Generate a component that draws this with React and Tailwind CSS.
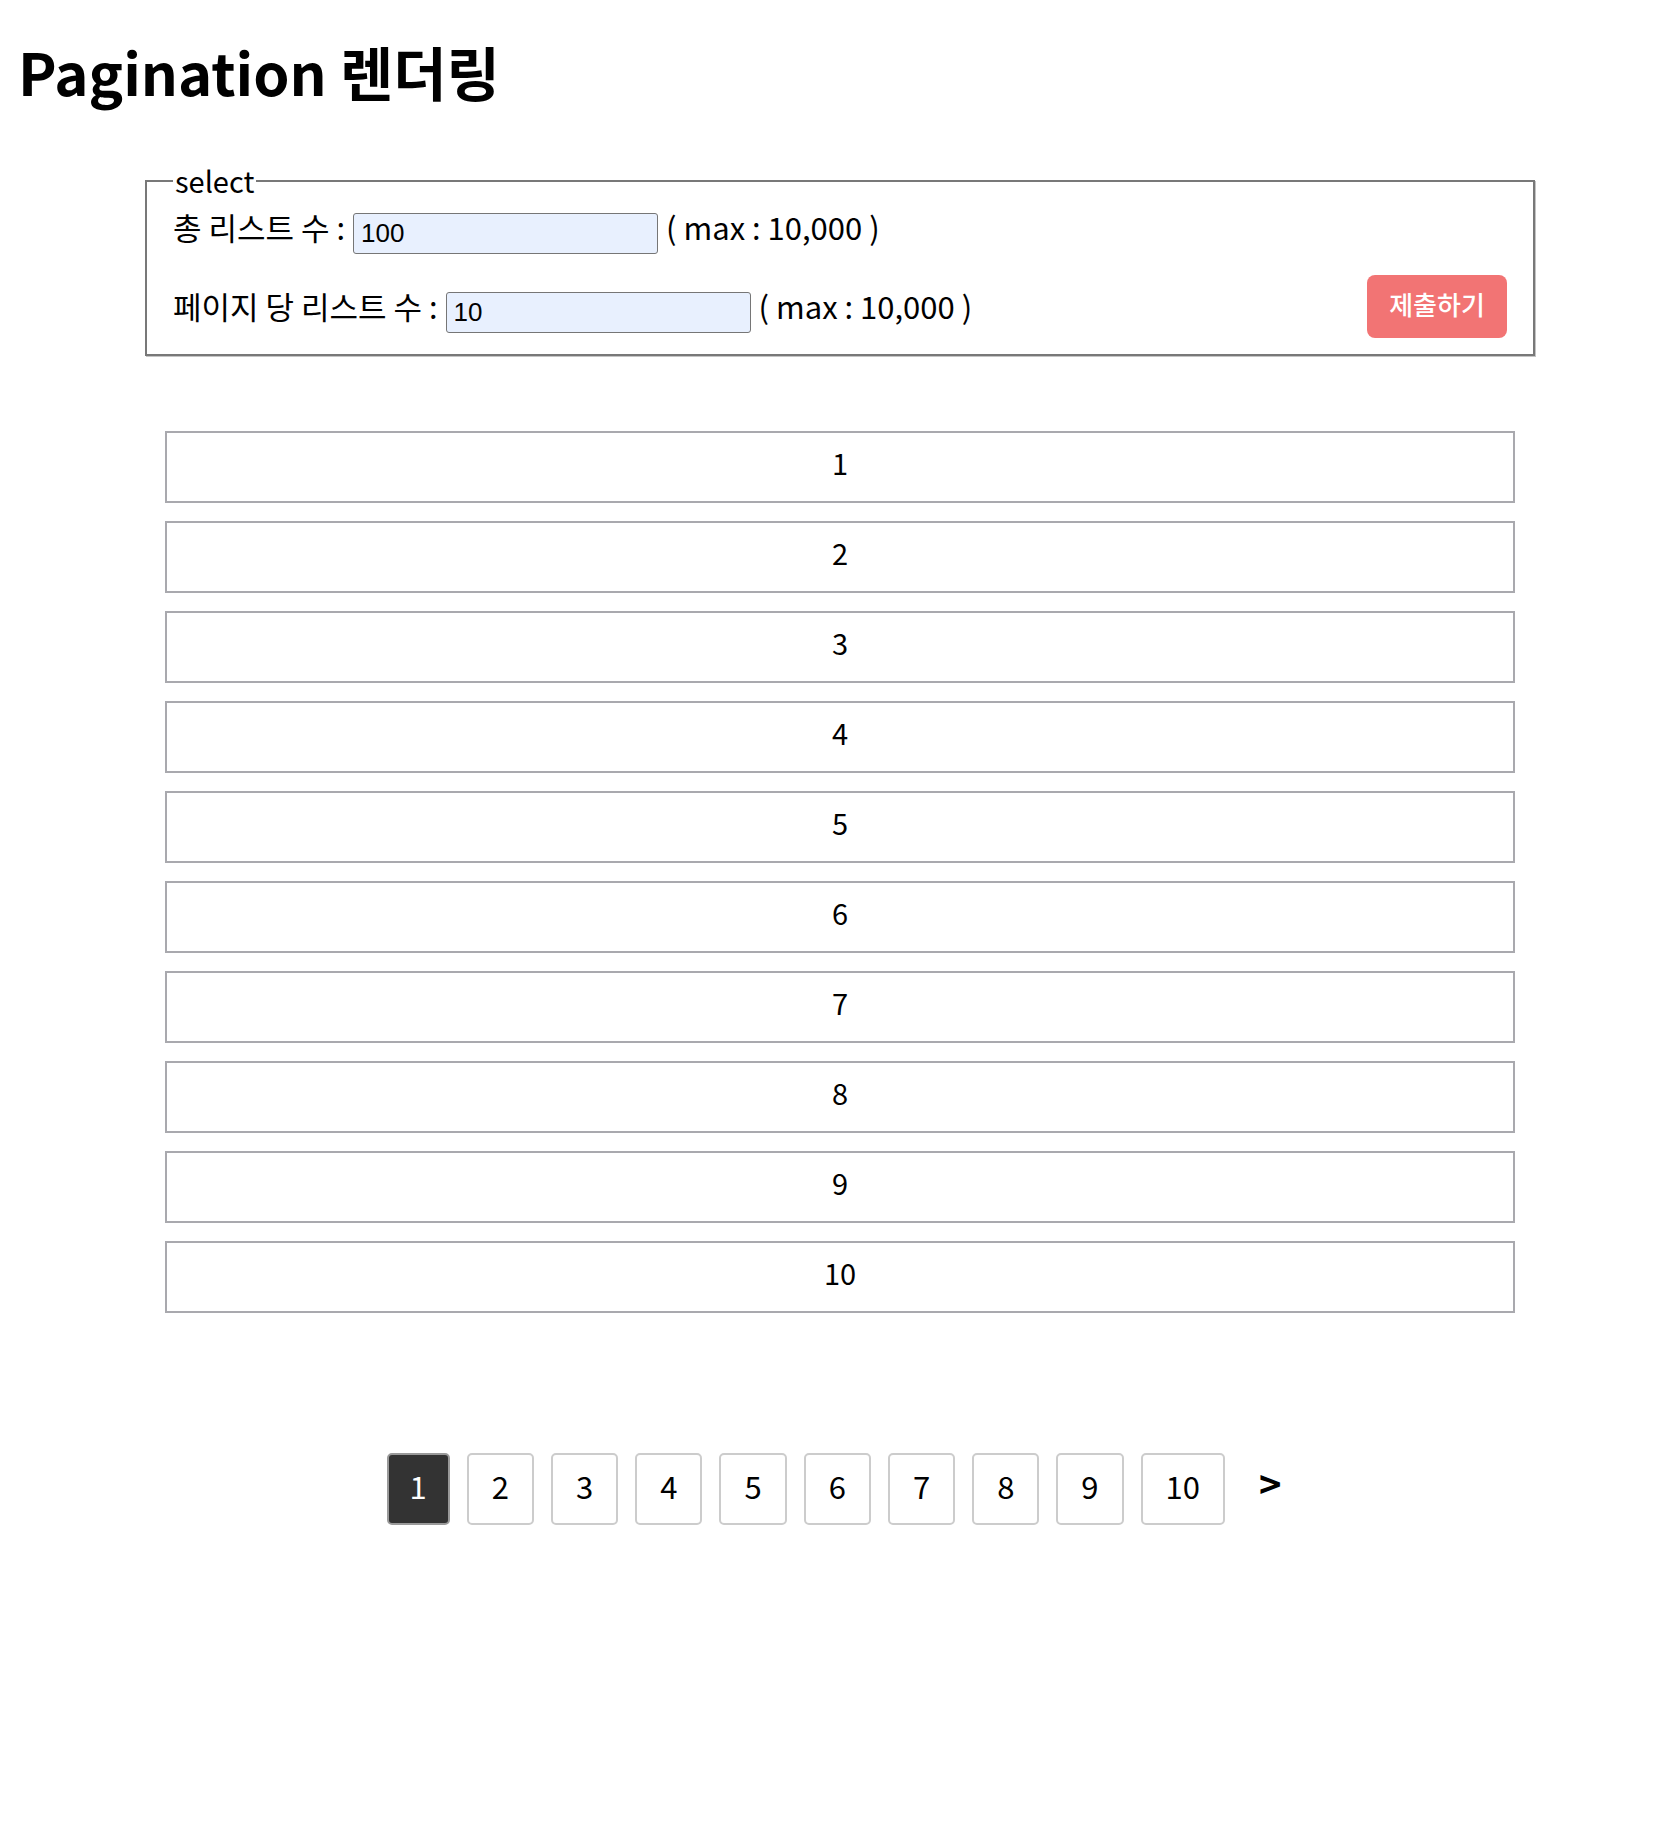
import React, { useState } from 'react';

const App = () => {
  const [total, setTotal] = useState('100');
  const [perPage, setPerPage] = useState('10');
  const [page, setPage] = useState(1);

  const size = Number(perPage) || 10;
  const items = Array.from({ length: size }, (_, i) => (page - 1) * size + i + 1);
  const pages = Array.from({ length: 10 }, (_, i) => i + 1);

  return (
    <div className="min-h-[1828px] bg-white font-['Noto_Sans_CJK_KR',sans-serif] text-black">
      {/* Title */}
      <h1 className="pl-[18px] pt-[36px] text-[58px] font-bold leading-[70px]">Pagination 렌더링</h1>

      {/* Select form */}
      <fieldset className="mx-auto mt-[53px] w-[1390px] border-2 border-[#787878] px-[26px] pt-[10px] pb-[21px] text-[31px] shadow-[1px_1px_0_#c4c4c4]">
        <legend className="px-[2px] text-[29px]">select</legend>

        <div className="flex h-[41px] items-center gap-[8px]">
          <span className="pb-[12px]">총 리스트 수 :</span>
          <input
            value={total}
            onChange={(e) => setTotal(e.target.value)}
            className="h-[41px] w-[305px] rounded-[3px] border border-[#767676] bg-[#e8f0fe] pl-[7px] font-['Liberation_Sans',sans-serif] text-[26px] outline-none"
          />
          <span className="pb-[12px]">( max : 10,000 )</span>
        </div>

        <div className="mt-[38px] flex h-[41px] items-start justify-between">
          <div className="flex h-[41px] items-center gap-[8px]">
            <span className="pb-[12px]">페이지 당 리스트 수 :</span>
            <input
              value={perPage}
              onChange={(e) => setPerPage(e.target.value)}
              className="h-[41px] w-[305px] rounded-[3px] border border-[#767676] bg-[#e8f0fe] pl-[7px] font-['Liberation_Sans',sans-serif] text-[26px] outline-none"
            />
            <span className="pb-[12px]">( max : 10,000 )</span>
          </div>
          <button className="-mt-[17px] h-[63px] w-[140px] rounded-[8px] bg-[#f27474] pb-[5px] text-[26px] font-medium text-white">
            제출하기
          </button>
        </div>
      </fieldset>

      {/* List */}
      <div className="mx-auto mt-[75px] flex w-[1350px] flex-col gap-[18px]">
        {items.map((n) => (
          <div
            key={n}
            className="flex h-[72px] items-center justify-center border-2 border-[#a9a9ae] pb-[8px] text-[29px]"
          >
            {n}
          </div>
        ))}
      </div>

      {/* Pagination */}
      <div className="mt-[140px] flex items-center justify-center gap-[17px] pr-[12px]">
        {pages.map((p) => (
          <button
            key={p}
            onClick={() => setPage(p)}
            className={
              p === page
                ? 'h-[72px] rounded-[5px] border-2 border-[#9a9a9a] bg-[#333333] px-[21px] pb-[4px] text-[31px] text-white'
                : 'h-[72px] rounded-[5px] border-2 border-[#cccccc] bg-white px-[23px] pb-[4px] text-[31px] text-black'
            }
          >
            {p}
          </button>
        ))}
        <span className="ml-[17px] pb-[12px] text-[38px] font-bold">&gt;</span>
      </div>
    </div>
  );
};

export default App;
